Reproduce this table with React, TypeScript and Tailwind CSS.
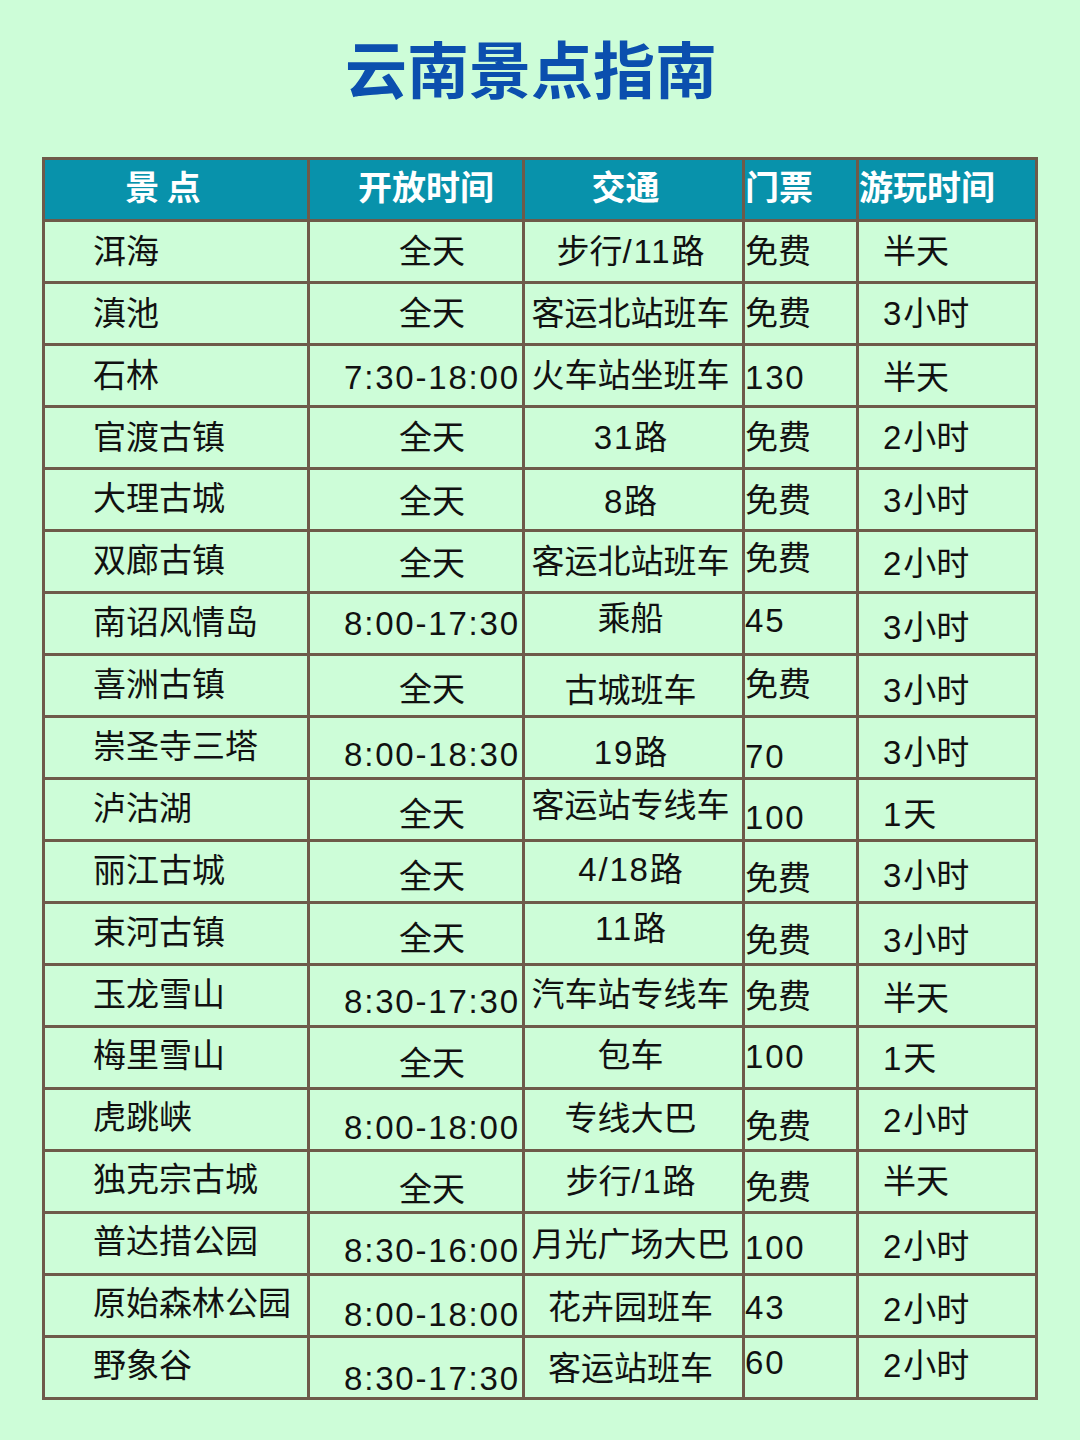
import React from "react";

// vertical nudge per cell, the source table has uneven baselines
const nudge: Record<number, string> = {
  [-5]: "-translate-y-[5px]",
  [-4]: "-translate-y-[4px]",
  [-3]: "-translate-y-[3px]",
  [-2]: "-translate-y-[2px]",
  [-1]: "-translate-y-[1px]",
  0: "",
  1: "translate-y-[1px]",
  2: "translate-y-[2px]",
  3: "translate-y-[3px]",
  4: "translate-y-[4px]",
  5: "translate-y-[5px]",
  6: "translate-y-[6px]",
  7: "translate-y-[7px]",
  8: "translate-y-[8px]",
  9: "translate-y-[9px]",
  10: "translate-y-[10px]",
  11: "translate-y-[11px]",
};

type Row = { cells: [string, string, string, string, string]; dy: number[] };

const rows: Row[] = [
  { cells: ["洱海", "全天", "步行/11路", "免费", "半天"], dy: [0, 0, 0, 0, 0] },
  { cells: ["滇池", "全天", "客运北站班车", "免费", "3小时"], dy: [0, 0, 0, 0, 0] },
  { cells: ["石林", "7:30-18:00", "火车站坐班车", "130", "半天"], dy: [0, 2, 0, 2, 2] },
  { cells: ["官渡古镇", "全天", "31路", "免费", "2小时"], dy: [0, 0, 0, 0, 0] },
  { cells: ["大理古城", "全天", "8路", "免费", "3小时"], dy: [-1, 2, 2, 1, 1] },
  { cells: ["双廊古镇", "全天", "客运北站班车", "免费", "2小时"], dy: [-1, 2, 0, -3, 2] },
  { cells: ["南诏风情岛", "8:00-17:30", "乘船", "45", "3小时"], dy: [-1, 0, -5, -3, 4] },
  { cells: ["喜洲古镇", "全天", "古城班车", "免费", "3小时"], dy: [-1, 4, 5, -1, 5] },
  { cells: ["崇圣寺三塔", "8:00-18:30", "19路", "70", "3小时"], dy: [-1, 7, 5, 9, 5] },
  { cells: ["泸沽湖", "全天", "客运站专线车", "100", "1天"], dy: [-1, 5, -4, 8, 5] },
  { cells: ["丽江古城", "全天", "4/18路", "免费", "3小时"], dy: [-1, 5, -2, 7, 4] },
  { cells: ["束河古镇", "全天", "11路", "免费", "3小时"], dy: [-1, 5, -5, 7, 7] },
  { cells: ["玉龙雪山", "8:30-17:30", "汽车站专线车", "免费", "半天"], dy: [-1, 6, -1, 1, 3] },
  { cells: ["梅里雪山", "全天", "包车", "100", "1天"], dy: [-2, 6, -2, -1, 1] },
  { cells: ["虎跳峡", "8:00-18:00", "专线大巴", "免费", "2小时"], dy: [-2, 8, -1, 7, 1] },
  { cells: ["独克宗古城", "全天", "步行/1路", "免费", "半天"], dy: [-2, 8, 0, 6, 0] },
  { cells: ["普达措公园", "8:30-16:00", "月光广场大巴", "100", "2小时"], dy: [-2, 7, 1, 4, 3] },
  { cells: ["原始森林公园", "8:00-18:00", "花卉园班车", "43", "2小时"], dy: [-2, 9, 2, 2, 4] },
  { cells: ["野象谷", "8:30-17:30", "客运站班车", "60", "2小时"], dy: [-2, 11, 1, -5, -2] },
];

// horizontal placement of each column's text
const colAlign = [
  "justify-start pl-[48px]",
  "justify-center pl-[32px]",
  "justify-center pr-[6px]",
  "justify-start pl-0",
  "justify-start pl-[24px]",
];

const headers = [
  { text: "景 点", cls: "justify-center pr-[26px]" },
  { text: "开放时间", cls: "justify-center pl-[20px]" },
  { text: "交通", cls: "justify-center pr-[16px]" },
  { text: "门票", cls: "justify-start pl-0" },
  { text: "游玩时间", cls: "justify-start pl-0" },
];

// digits in the source are set a bit looser than the CJK text
function Cell({ text }: { text: string }) {
  const parts = text.split(/([0-9:\-/]+)/).filter(Boolean);
  return (
    <>
      {parts.map((p, i) =>
        /[0-9]/.test(p) ? (
          <span key={i} className="tracking-[1.8px]">
            {p}
          </span>
        ) : (
          <span key={i}>{p}</span>
        )
      )}
    </>
  );
}

export default function App() {
  return (
    <div className="min-h-[1440px] w-full bg-[#cdfdd8] font-['Liberation_Sans','Noto_Sans_CJK_SC',sans-serif] pt-[27px]">
      <h1 className="text-center text-[62px] leading-[80px] font-bold text-[#0b4fae] font-['Noto_Sans_CJK_SC',sans-serif] pr-[18px]">
        云南景点指南
      </h1>

      <div className="mt-[50px] mx-auto w-[996px] bg-[#6e5a49] p-[3px] grid grid-cols-[262px_212px_217px_111px_176px] gap-[3px]">
        {headers.map((h) => (
          <div
            key={h.text}
            className={`h-[59px] bg-[#0892ab] flex items-center text-white text-[34px] font-bold whitespace-nowrap font-['Noto_Sans_CJK_SC',sans-serif] ${h.cls}`}
          >
            <span className="-translate-y-[4px]">{h.text}</span>
          </div>
        ))}

        {rows.map((r) =>
          r.cells.map((c, i) => (
            <div
              key={r.cells[0] + i}
              className={`h-[59px] bg-[#cdfdd8] flex items-center text-[33px] leading-[40px] text-[#111111] whitespace-nowrap ${colAlign[i]}`}
            >
              <span className={nudge[r.dy[i]]}>
                <Cell text={c} />
              </span>
            </div>
          ))
        )}
      </div>
    </div>
  );
}
